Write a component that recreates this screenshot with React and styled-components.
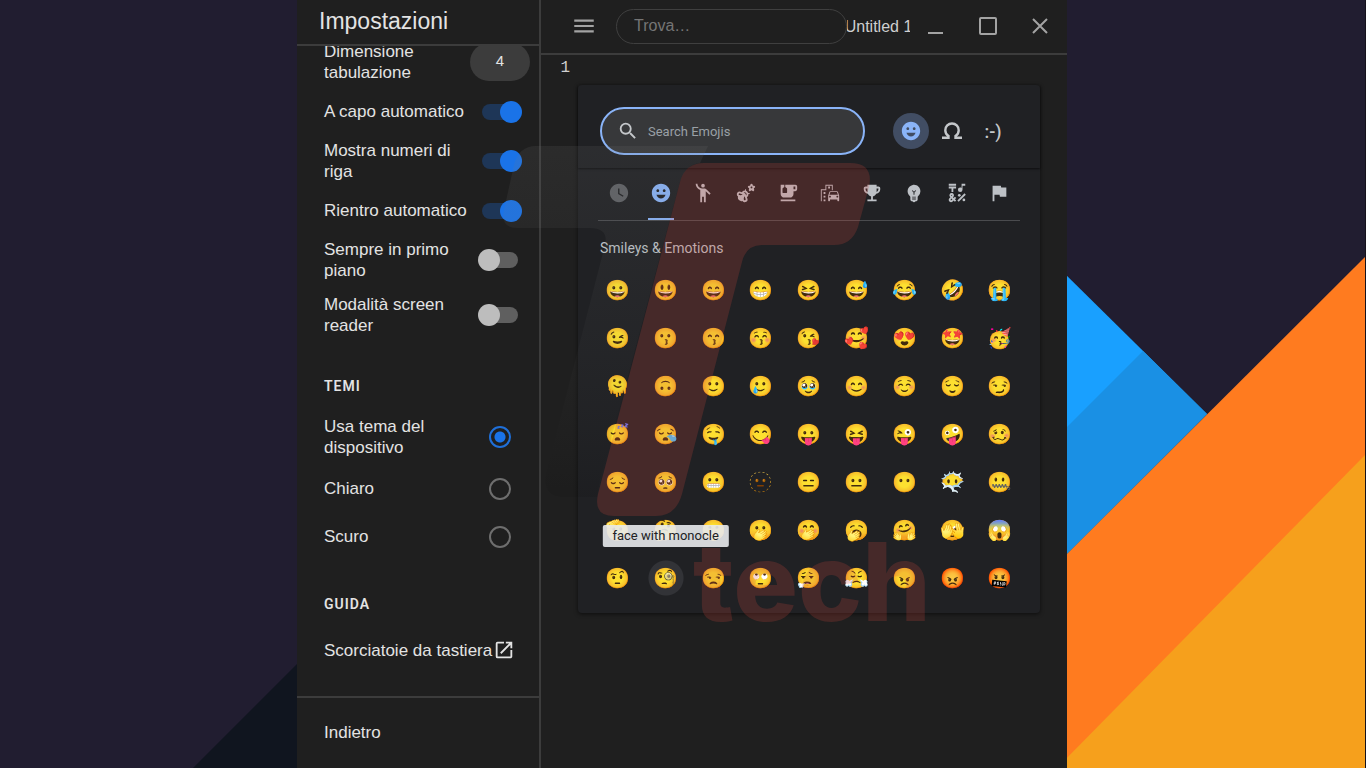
import React from "react";
import styled, { createGlobalStyle } from "styled-components";
import {
  MdWatchLater, MdEmojiEmotions, MdEmojiPeople, MdEmojiNature, MdEmojiFoodBeverage,
  MdEmojiTransportation, MdEmojiEvents, MdEmojiObjects, MdEmojiSymbols, MdFlag,
  MdSearch, MdOpenInNew, MdMenu,
} from "react-icons/md";

const GlobalStyle = createGlobalStyle`
  *, *::before, *::after { box-sizing: border-box; }
  body { margin: 0; background: #211d30; font-family: "Liberation Sans", Arial, sans-serif; }
  button, input { font: inherit; color: inherit; margin: 0; padding: 0; border: 0; background: none; }
  h1, h2, h3 { margin: 0; font-weight: 400; }
`;

const Desktop = styled.div`
  position: relative;
  display: grid;
  grid-template-columns: 297fr 770fr 299fr;
  min-height: 100vh;
  overflow: hidden;
`;
const Wallpaper = styled.svg`
  position: absolute;
  inset: 0;
  width: 100%;
  height: 100%;
`;
const Window = styled.main`
  position: relative;
  grid-column: 2;
  display: flex;
  background: #1f1f1f;
  color: #e3e3e3;
  overflow: hidden;
`;

const Sidebar = styled.aside`
  flex: 0 0 244px;
  display: flex;
  flex-direction: column;
  border-right: 2px solid #3c3c3c;
`;
const SidebarTitle = styled.h1`
  height: 46px;
  padding-left: 22px;
  border-bottom: 2px solid #3c3c3c;
  font-size: 23px;
  line-height: 42px;
`;
const Settings = styled.div`
  flex: 1;
  overflow: hidden;
  font-size: 17px;
  line-height: 21px;
`;
const Group = styled.div`
  margin-top: ${(p) => (p.$scrolled ? "-11px" : "0")};
`;
const Row = styled.label`
  display: flex;
  align-items: center;
  justify-content: space-between;
  min-height: ${(p) => (p.$tall ? "48px" : "44px")};
  padding: 6px ${(p) => p.$end || 17}px 7px 27px;
`;
const GroupTitle = styled.h2`
  margin: 32px 0 13px;
  padding-left: 27px;
  font: 600 14px/22px Roboto, sans-serif;
  letter-spacing: 1px;
`;
const TabSize = styled.input`
  width: 60px;
  height: 38px;
  padding-bottom: 3px;
  border-radius: 19px;
  background: #3c3c3c;
  text-align: center;
  font-size: 15px;
`;
const Toggle = styled.input`
  appearance: none;
  position: relative;
  flex: 0 0 44px;
  height: 22px;
  &::before {
    content: "";
    position: absolute;
    inset: 3px 4px;
    border-radius: 8px;
    background: #5f5f5f;
  }
  &::after {
    content: "";
    position: absolute;
    top: 0;
    left: 0;
    width: 22px;
    height: 22px;
    border-radius: 50%;
    background: #bdbdbd;
  }
  &:checked::before { background: #1e3657; }
  &:checked::after { left: 22px; background: #1a73e8; }
`;
const Radio = styled.input`
  appearance: none;
  flex: 0 0 22px;
  height: 22px;
  border: 2px solid #6e6e6e;
  border-radius: 50%;
  &:checked {
    border-color: #1f6fd8;
    background: radial-gradient(circle, #1a73e8 5px, transparent 6px);
  }
`;
const HelpLink = styled.a`
  display: flex;
  align-items: center;
  min-height: 44px;
  padding-left: 27px;
  color: inherit;
  text-decoration: none;
  white-space: nowrap;
  svg { flex: none; margin-left: 1px; }
`;
const BackButton = styled.button`
  height: 72px;
  padding-left: 27px;
  border-top: 2px solid #3c3c3c;
  text-align: left;
  font-size: 17px;
`;

const Editor = styled.section`
  flex: 1;
  min-width: 0;
`;
const Toolbar = styled.header`
  display: flex;
  align-items: center;
  height: 55px;
  padding: 0 1px 0 30px;
  border-bottom: 2px solid #3c3c3c;
`;
const ToolButton = styled.button`
  display: flex;
  align-items: center;
  justify-content: center;
  width: ${(p) => p.$width || 52}px;
  height: 40px;
  padding-bottom: 2px;
  color: #a3a3a3;
`;
const FindInput = styled.input`
  flex: 1;
  min-width: 0;
  height: 35px;
  margin-left: 19px;
  padding: 0 17px 2px;
  border: 1px solid #3f3f3f;
  border-radius: 18px;
  font-size: 16px;
  &::placeholder { color: #757575; opacity: 1; }
`;
const FileTitle = styled.span`
  display: flex;
  justify-content: center;
  width: 63px;
  overflow: hidden;
  white-space: nowrap;
  font-size: 16px;
  color: #cfcfcf;
`;
const Document = styled.div`
  display: flex;
`;
const LineNumber = styled.span`
  flex: 0 0 37px;
  padding: 4px 8px 0 0;
  text-align: right;
  color: #cfcfcf;
  font: 16px/18px "Liberation Mono", monospace;
`;
const Picker = styled.section`
  flex: 1;
  margin: 30px 27px 0 0;
  padding-bottom: 11px;
  border-radius: 4px;
  background: #202124;
  box-shadow: 0 1px 4px rgba(0, 0, 0, 0.6);
  font-family: Roboto, sans-serif;
`;
const PickerHeader = styled.div`
  display: flex;
  align-items: center;
  height: 83px;
  padding: 9px 24px 0 22px;
  box-shadow: 0 1px 2px rgba(0, 0, 0, 0.6);
`;
const SearchBox = styled.label`
  flex: 1;
  display: flex;
  align-items: center;
  gap: 9px;
  height: 48px;
  margin-right: 28px;
  padding-left: 15px;
  border: 2px solid #8ab4f8;
  border-radius: 24px;
  background: #37383a;
  color: #c4c7ca;
  input { flex: 1; min-width: 0; outline: 0; font-size: 13px; }
  input::placeholder { color: #9aa0a6; opacity: 1; }
`;
const ModeButton = styled.button`
  display: flex;
  align-items: center;
  justify-content: center;
  width: 36px;
  height: 36px;
  margin-right: 5px;
  border-radius: 50%;
  background: ${(p) => (p.$active ? "#414d63" : "transparent")};
  color: ${(p) => (p.$active ? "#8ab4f8" : "#c4c7ca")};
  font-size: 18px;
  font-weight: 500;
`;
const Categories = styled.div`
  display: grid;
  grid-template-columns: repeat(10, 1fr);
  margin: 0 20px;
  border-bottom: 1px solid #4a4b4e;
`;
const CategoryButton = styled.button`
  display: flex;
  align-items: center;
  justify-content: center;
  height: 52px;
  color: ${(p) => (p.$active ? "#8ab4f8" : p.$muted ? "#5f6165" : "#bdc1c6")};
  span {
    display: flex;
    justify-content: center;
    align-items: center;
    height: 52px;
    width: 26px;
    border-bottom: 2px solid ${(p) => (p.$active ? "#8ab4f8" : "transparent")};
  }
`;
const PickerTitle = styled.h3`
  height: 45px;
  padding: 17px 0 0 22px;
  font-size: 14px;
  line-height: 20px;
  color: #bdc1c6;
`;
const EmojiGrid = styled.div`
  display: grid;
  grid-template-columns: repeat(9, 1fr);
  grid-auto-rows: 48px;
  margin: 0 16px;
`;
const EmojiButton = styled.button`
  position: relative;
  display: flex;
  align-items: center;
  justify-content: center;
  font: 20px/24px "Noto Color Emoji", sans-serif;
  background: ${(p) => (p.$hover ? "radial-gradient(circle, #323337 17px, transparent 18px)" : "none")};
`;
const Tooltip = styled.span`
  position: absolute;
  z-index: 1;
  left: 50%;
  bottom: calc(100% + 7px);
  transform: translateX(-50%);
  padding: 0 10px;
  border-radius: 2px;
  background: rgba(232, 234, 237, 0.9);
  color: #202124;
  font: 13px/22px Roboto, sans-serif;
  white-space: nowrap;
`;

const Watermark = styled.div`
  position: absolute;
  top: 140px;
  left: 200px;
  width: 440px;
  pointer-events: none;
  svg { display: block; }
`;
const WatermarkText = styled.span`
  position: absolute;
  top: 382px;
  left: 196px;
  color: rgba(214, 72, 60, 0.21);
  font: 800 108px/120px Inter, sans-serif;
`;

const toggles = [
  ["A capo automatico", true],
  ["Mostra numeri di riga", true],
  ["Rientro automatico", true],
  ["Sempre in primo piano", false],
  ["Modalità screen reader", false],
];
const themes = [["Usa tema del dispositivo", true], ["Chiaro", false], ["Scuro", false]];
const categories = [
  ["Recenti", MdWatchLater], ["Smileys", MdEmojiEmotions], ["People", MdEmojiPeople],
  ["Nature", MdEmojiNature], ["Food", MdEmojiFoodBeverage], ["Travel", MdEmojiTransportation],
  ["Events", MdEmojiEvents], ["Objects", MdEmojiObjects], ["Symbols", MdEmojiSymbols], ["Flags", MdFlag],
];
const emojis = (
  "😀 😃 😄 😁 😆 😅 😂 🤣 😭 " +
  "😉 😗 😙 😚 😘 🥰 😍 🤩 🥳 " +
  "🫠 🙃 🙂 🥲 🥹 😊 ☺️ 😌 😏 " +
  "😴 😪 🤤 😋 😛 😝 😜 🤪 🥴 " +
  "😔 🥺 😬 🫥 😑 😐 😶 😶‍🌫️ 🤐 " +
  "🫡 🤔 🤫 🫢 🤭 🥱 🤗 🫣 😱 " +
  "🤨 🧐 😒 🙄 😮‍💨 😤 😠 😡 🤬"
).split(" ");

export default function App() {
  return (
    <>
      <GlobalStyle />
      <Desktop>
        <Wallpaper viewBox="0 0 1366 768" preserveAspectRatio="none" aria-hidden="true">
          <path fill="#10151f" d="M193 768 297 664V768Z" />
          <path fill="#19a0ff" d="M1060 269 1207 414 1060 561Z" />
          <path fill="#1a90e4" d="M1143 351 1207 414 1060 561V434Z" />
          <path fill="#ff7b1f" d="M1060 561 1366 256V768H1060Z" />
          <path fill="#f6a01c" d="M1057 768 1366 454V768Z" />
          <path fill="#15121c" d="M1365 0h1v768h-1z" />
        </Wallpaper>
        <Window>
          <Sidebar>
            <SidebarTitle>Impostazioni</SidebarTitle>
            <Settings>
              <Group $scrolled>
                <Row $end={9}>
                  Dimensione tabulazione
                  <TabSize defaultValue="4" inputMode="numeric" />
                </Row>
                {toggles.map(([name, on]) => (
                  <Row key={name}>
                    {name}
                    <Toggle type="checkbox" defaultChecked={on} />
                  </Row>
                ))}
              </Group>
              <GroupTitle>TEMI</GroupTitle>
              <Group>
                {themes.map(([name, on]) => (
                  <Row key={name} $tall $end={28}>
                    {name}
                    <Radio type="radio" name="theme" defaultChecked={on} />
                  </Row>
                ))}
              </Group>
              <GroupTitle>GUIDA</GroupTitle>
              <HelpLink href="#shortcuts">
                Scorciatoie da tastiera
                <MdOpenInNew size={22} />
              </HelpLink>
            </Settings>
            <BackButton>Indietro</BackButton>
          </Sidebar>
          <Editor>
            <Toolbar>
              <ToolButton $width={26} aria-label="Menu"><MdMenu size={26} /></ToolButton>
              <FindInput placeholder="Trova…" aria-label="Trova" />
              <FileTitle>Untitled 1</FileTitle>
              <ToolButton aria-label="Minimize">
                <svg width="16" height="16"><path d="M0 15h15" stroke="currentColor" strokeWidth="2" /></svg>
              </ToolButton>
              <ToolButton aria-label="Maximize">
                <svg width="18" height="18"><rect x="1" y="1" width="16" height="16" rx="1" fill="none" stroke="currentColor" strokeWidth="2" /></svg>
              </ToolButton>
              <ToolButton aria-label="Close">
                <svg width="16" height="16"><path d="M1 1 15 15M15 1 1 15" stroke="currentColor" strokeWidth="2" /></svg>
              </ToolButton>
            </Toolbar>
            <Document>
              <LineNumber>1</LineNumber>
              <Picker>
                <PickerHeader>
                  <SearchBox>
                    <MdSearch size={22} />
                    <input placeholder="Search Emojis" aria-label="Search Emojis" />
                  </SearchBox>
                  <ModeButton $active aria-label="Emoji"><MdEmojiEmotions size={22} /></ModeButton>
                  <ModeButton aria-label="Symbols">
                    <svg width="20" height="18" viewBox="0 0 20 18" fill="none" stroke="currentColor" strokeWidth="2.400">
                      <path d="M0 15.800H6.500V14C4.500 12.700 3.300 10.700 3.300 8.200A6.700 6.700 0 0 1 16.700 8.200C16.700 10.700 15.500 12.700 13.500 14V15.800H20" />
                    </svg>
                  </ModeButton>
                  <ModeButton aria-label="Emoticons">:-)</ModeButton>
                </PickerHeader>
                <Categories>
                  {categories.map(([name, Icon], i) => (
                    <CategoryButton key={name} aria-label={name} $active={i === 1} $muted={i === 0}>
                      <span><Icon size={22} /></span>
                    </CategoryButton>
                  ))}
                </Categories>
                <PickerTitle>Smileys &amp; Emotions</PickerTitle>
                <EmojiGrid>
                  {emojis.map((e) => (
                    <EmojiButton key={e} $hover={e === "🧐"}>
                      {e}
                      {e === "🧐" && <Tooltip role="tooltip">face with monocle</Tooltip>}
                    </EmojiButton>
                  ))}
                </EmojiGrid>
              </Picker>
            </Document>
          </Editor>
          <Watermark aria-hidden="true">
            <svg width="440" height="400" viewBox="497 140 440 400">
              <defs>
                <linearGradient id="fade" x1="0" y1="0" x2="0" y2="1">
                  <stop offset="0" stopColor="#777" stopOpacity=".14" />
                  <stop offset=".5" stopColor="#777" stopOpacity=".06" />
                  <stop offset="1" stopColor="#000" stopOpacity=".08" />
                </linearGradient>
              </defs>
              <path fill="url(#fade)" d="M536 146H708L700 163Q685 165 680 182L600 480 597 497H565Q540 497 547 470L605 245Q609 228 590 228H518Q500 228 504 210L514 165Q519 146 536 146Z" />
              <path fill="#d6483c" fillOpacity=".21" d="M704 163H850Q874 163 869 187L858 227Q852 245 834 245H762Q746 245 742 262L682 494Q676 516 656 516H614Q593 516 598 494L680 182Q685 163 704 163Z" />
            </svg>
            <WatermarkText>tech</WatermarkText>
          </Watermark>
        </Window>
      </Desktop>
    </>
  );
}
